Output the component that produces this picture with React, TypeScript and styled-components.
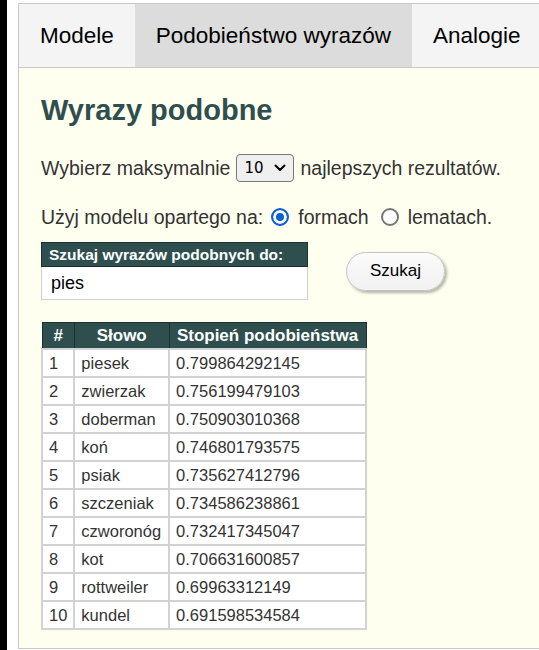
import React from "react";
import styled, { createGlobalStyle } from "styled-components";

const Global = createGlobalStyle`
  html, body {
    margin: 0;
    padding: 0;
    background: #ffffff;
    overflow: hidden;
  }
  body {
    font-family: "Liberation Sans", Arial, sans-serif;
  }
`;

const Page = styled.div`
  display: flex;
  align-items: flex-start;
  width: 539px;
  height: 650px;
  overflow: hidden;
`;

const EdgeStrip = styled.div`
  flex: none;
  width: 7px;
  height: 650px;
  background: #000;
`;

const Frame = styled.div`
  flex: none;
  margin: 3px 0 0 11px;
  width: 540px;
  border: 1px solid #c8c8c8;
`;

const TabBar = styled.nav`
  display: flex;
  height: 63px;
  background: #f4f4f4;
  border-bottom: 1px solid #c8c8c8;
`;

const Tab = styled.div<{ $active?: boolean }>`
  padding: 0 21px;
  line-height: 63px;
  font-size: 22.5px;
  color: #000;
  white-space: nowrap;
  background: ${(p) => (p.$active ? "#dcdcdc" : "#f4f4f4")};
`;

const Panel = styled.main`
  background: #fffff0;
  padding: 25px 22px 18px 22px;
  color: #333;
`;

const Heading = styled.h1`
  margin: 0;
  font-size: 29px;
  line-height: 34px;
  font-weight: bold;
  color: #2f4f4f;
`;

const Line = styled.p`
  margin: 0;
  font-size: 19.5px;
  line-height: 28px;
  display: flex;
  align-items: center;
  white-space: nowrap;
`;

const CountLine = styled(Line)`
  margin-top: 27px;
`;

const ModelLine = styled(Line)`
  margin-top: 21px;
`;

const SelectWrap = styled.span`
  position: relative;
  display: inline-flex;
  margin: 0 6px;
`;

const Select = styled.select`
  appearance: none;
  -webkit-appearance: none;
  width: 58px;
  height: 28px;
  box-sizing: border-box;
  border: 1px solid #767676;
  border-radius: 4px;
  background: #efefef;
  padding: 0 0 0 7px;
  font-family: "DejaVu Sans", Tahoma, sans-serif;
  font-size: 15px;
  color: #000;
`;

const Chevron = styled.svg`
  position: absolute;
  right: 8px;
  top: 10px;
  pointer-events: none;
`;

const Option = styled.label`
  display: inline-flex;
  align-items: center;
  gap: 9px;
  margin-left: 12px;
  &:first-of-type {
    margin-left: 8px;
  }
`;

const Radio = styled.input`
  appearance: none;
  -webkit-appearance: none;
  margin: 0;
  width: 18px;
  height: 18px;
  box-sizing: border-box;
  border-radius: 50%;
  border: 2px solid #767676;
  background: #fff;
  &:checked {
    border-color: #0b62d6;
    background: #0b62d6;
    box-shadow: inset 0 0 0 3px #fff;
  }
`;

const SearchRow = styled.div`
  display: flex;
  align-items: center;
  gap: 38px;
  margin-top: 11px;
`;

const SearchBox = styled.div`
  width: 267px;
  display: flex;
  flex-direction: column;
`;

const SearchLabel = styled.div`
  height: 25px;
  box-sizing: border-box;
  background: #2f4f4f;
  border: 1px solid #1c3030;
  color: #fff;
  font-weight: bold;
  font-size: 15.5px;
  line-height: 23px;
  padding-left: 7px;
  white-space: nowrap;
`;

const SearchInput = styled.input`
  height: 33px;
  box-sizing: border-box;
  border: 1px solid #cfcfcf;
  border-top: none;
  background: #fff;
  padding: 0 9px;
  font-family: "Liberation Sans", Arial, sans-serif;
  font-size: 18px;
  color: #000;
  outline: none;
`;

const SearchButton = styled.button`
  width: 99px;
  height: 39px;
  border-radius: 20px;
  border: 1px solid #c4c4c4;
  background: linear-gradient(#fbfbfb, #f1f1f1);
  box-shadow: 2px 2px 3px rgba(0, 0, 0, 0.3);
  font-family: "Liberation Sans", Arial, sans-serif;
  font-size: 17px;
  color: #000;
  padding: 0;
`;

const Table = styled.table`
  margin-top: 22px;
  border-collapse: collapse;
  width: 326px;
  background: #fff;
`;

const HeadCell = styled.th<{ $w: number }>`
  width: ${(p) => p.$w}px;
  height: 25px;
  padding: 0;
  background: #2f4f4f;
  border: 1px solid #1c3030;
  color: #fff;
  font-weight: bold;
  font-size: 17px;
  text-align: center;
  white-space: nowrap;
`;

const Cell = styled.td`
  height: 26px;
  padding: 0 6px;
  border: 2px solid #d2d2d2;
  font-size: 16.5px;
  color: #333;
  white-space: nowrap;
`;

const results: [string, string][] = [
  ["piesek", "0.799864292145"],
  ["zwierzak", "0.756199479103"],
  ["doberman", "0.750903010368"],
  ["koń", "0.746801793575"],
  ["psiak", "0.735627412796"],
  ["szczeniak", "0.734586238861"],
  ["czworonóg", "0.732417345047"],
  ["kot", "0.706631600857"],
  ["rottweiler", "0.69963312149"],
  ["kundel", "0.691598534584"],
];

export default function App() {
  return (
    <>
      <Global />
      <Page>
        <EdgeStrip />
        <Frame>
          <TabBar>
            <Tab>Modele</Tab>
            <Tab $active>Podobieństwo wyrazów</Tab>
            <Tab>Analogie</Tab>
          </TabBar>
          <Panel>
            <Heading>Wyrazy podobne</Heading>
            <CountLine>
              Wybierz maksymalnie
              <SelectWrap>
                <Select defaultValue="10">
                  <option value="5">5</option>
                  <option value="10">10</option>
                  <option value="20">20</option>
                </Select>
                <Chevron width="12" height="8" viewBox="0 0 12 8">
                  <path d="M1.5 1.5 L6 6 L10.5 1.5" fill="none" stroke="#000" strokeWidth="2" strokeLinecap="round" strokeLinejoin="round" />
                </Chevron>
              </SelectWrap>
              najlepszych rezultatów.
            </CountLine>
            <ModelLine>
              Użyj modelu opartego na:
              <Option>
                <Radio type="radio" name="model" defaultChecked />
                formach
              </Option>
              <Option>
                <Radio type="radio" name="model" />
                lematach.
              </Option>
            </ModelLine>
            <SearchRow>
              <SearchBox>
                <SearchLabel>Szukaj wyrazów podobnych do:</SearchLabel>
                <SearchInput defaultValue="pies" />
              </SearchBox>
              <SearchButton>Szukaj</SearchButton>
            </SearchRow>
            <Table>
              <thead>
                <tr>
                  <HeadCell $w={31}>#</HeadCell>
                  <HeadCell $w={94}>Słowo</HeadCell>
                  <HeadCell $w={200}>Stopień podobieństwa</HeadCell>
                </tr>
              </thead>
              <tbody>
                {results.map(([word, score], i) => (
                  <tr key={word}>
                    <Cell>{i + 1}</Cell>
                    <Cell>{word}</Cell>
                    <Cell>{score}</Cell>
                  </tr>
                ))}
              </tbody>
            </Table>
          </Panel>
        </Frame>
      </Page>
    </>
  );
}
